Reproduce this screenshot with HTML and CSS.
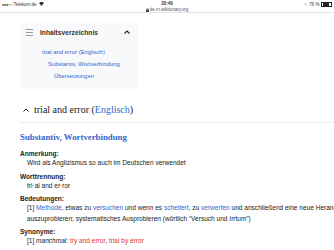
FILE: index.html
```html
<!DOCTYPE html>
<html lang="de">
<head>
<meta charset="utf-8">
<link rel="stylesheet" href="styles.css">
</head>
<body>
<div class="statusbar">
  <div class="sb-left"><span class="dots">●●●○○</span> Telekom.de
    <svg class="wifi" width="5" height="4" viewBox="0 0 10 8"><path d="M5 8 L0 2 A7 7 0 0 1 10 2 Z" fill="#333"/></svg>
  </div>
  <div class="sb-center">
    <div class="time">20:49</div>
    <div class="url"><svg width="3" height="4" viewBox="0 0 6 8"><rect x="0" y="3" width="6" height="5" fill="#444"/><path d="M1.5 3 V2 A1.5 1.5 0 0 1 4.5 2 V3" stroke="#444" fill="none"/></svg> de.m.wiktionary.org</div>
  </div>
  <div class="sb-right"><span class="arrow">↖</span> 76 % <span class="battery"><span class="battery-fill"></span></span></div>
</div>
<main class="page">
  <nav class="toc">
    <div class="toc-head">
      <svg class="toc-icon" width="7" height="7" viewBox="0 0 7 7"><rect y="0" width="7" height="1" fill="#999"/><rect y="3" width="7" height="1" fill="#999"/><rect y="6" width="7" height="1" fill="#999"/></svg>
      <span class="toc-title">Inhaltsverzeichnis</span>
      <svg class="toc-caret" width="6" height="4" viewBox="0 0 6 4"><path d="M0.5 3.5 L3 1 L5.5 3.5" stroke="#222" stroke-width="1.1" fill="none"/></svg>
    </div>
    <ul class="toc-list">
      <li class="lvl1"><a>trial and error (Englisch)</a></li>
      <li class="lvl2"><a>Substantiv, Wortverbindung</a></li>
      <li class="lvl3"><a>Übersetzungen</a></li>
    </ul>
  </nav>
  <h2 class="lang-head"><svg class="h-caret" width="6" height="4" viewBox="0 0 6 4"><path d="M0.5 3.5 L3 1 L5.5 3.5" stroke="#222" stroke-width="1" fill="none"/></svg><span>trial and error (<a class="blue">Englisch</a>)</span></h2>
  <h3 class="pos">Substantiv, Wortverbindung</h3>
  <dl class="entry">
    <dt>Anmerkung:</dt>
    <dd>Wird als Anglizismus so auch im Deutschen verwendet</dd>
    <dt>Worttrennung:</dt>
    <dd>tri·al and er·ror</dd>
    <dt>Bedeutungen:</dt>
    <dd>[1] <a class="blue">Methode</a>, etwas zu <a class="blue">versuchen</a> und wenn es <a class="blue">scheitert</a>, zu <a class="blue">verwerfen</a> und anschließend eine neue Herangehensweise auszuprobieren; systematisches Ausprobieren (wörtlich “Versuch und Irrtum”)</dd>
    <dt>Synonyme:</dt>
    <dd>[1] <i>manchmal:</i> <a class="red">try and error</a>, <a class="red">trial by error</a></dd>
  </dl>
</main>
</body>
</html>
```
FILE: styles.css
```css
html, body {
  margin: 0;
  padding: 0;
  background: #fff;
  overflow: hidden;
  width: 334px;
  height: 250px;
}
body {
  font-family: "Liberation Sans", Arial, sans-serif;
  color: #222;
}
.statusbar {
  height: 12px;
  border-bottom: 1px solid #e4e4e4;
  display: flex;
  justify-content: space-between;
  align-items: flex-start;
  font-size: 4.5px;
  color: #333;
  padding: 0 2px;
  box-sizing: content-box;
  width: 330px;
}
.sb-left {
  padding-top: 1.5px;
  display: flex;
  align-items: center;
  gap: 1px;
  width: 60px;
}
.dots { letter-spacing: -0.3px; font-size: 4px; }
.wifi { margin-left: 1px; }
.sb-center {
  display: flex;
  flex-direction: column;
  align-items: center;
  line-height: 6px;
  padding-top: 0.5px;
}
.time { font-weight: bold; }
.url { color: #555; display: flex; align-items: center; gap: 1px; }
.sb-right {
  width: 60px;
  display: flex;
  justify-content: flex-end;
  align-items: center;
  gap: 1px;
  padding-top: 1.5px;
}
.arrow { font-size: 4px; color: #666; margin-right: 1px; }
.battery {
  width: 8px;
  height: 3px;
  border: 0.5px solid #222;
  display: inline-block;
  padding: 0.3px;
  margin-left: 1px;
}
.battery-fill { display: block; width: 76%; height: 100%; background: #222; }

.page {
  width: 395px;
  padding: 10px 0 0 20px;
}
.toc {
  width: 118px;
  background: #f8f9fa;
  padding: 5px 0 7px 0;
}
.toc-head {
  display: flex;
  align-items: center;
  height: 8px;
  padding: 0 8px 0 6px;
}
.toc-icon { margin-right: 7px; }
.toc-title {
  font-weight: bold;
  font-size: 6.7px;
  color: #333;
  flex: 1;
}
.toc-list {
  list-style: none;
  margin: 10px 0 0 0;
  padding: 0;
  font-size: 5.9px;
  line-height: 12px;
}
.toc-list a { color: #3366cc; }
.lvl1 { padding-left: 22px; }
.lvl2 { padding-left: 28px; }
.lvl3 { padding-left: 34px; }

.lang-head {
  margin: 14px 0 0 0;
  padding: 0 0 5px 3px;
  border-bottom: 1px solid #eaecf0;
  font-family: "Liberation Serif", "Times New Roman", serif;
  font-weight: normal;
  font-size: 10px;
  line-height: 14px;
  color: #222;
  display: flex;
  align-items: center;
  gap: 5px;
}
.blue { color: #3366cc; }
.red { color: #dd3333; }
.pos {
  margin: 8px 0 0 0;
  font-family: "Liberation Serif", "Times New Roman", serif;
  font-weight: bold;
  font-size: 8.8px;
  line-height: 12px;
  color: #3366cc;
}
.entry {
  margin: 6px 0 0 0;
  font-size: 6.55px;
}
.entry dt {
  font-weight: bold;
  line-height: 9px;
  margin-top: 3px;
}
.entry dt:first-child { margin-top: 0; }
.entry dd {
  margin: 0 0 0 7px;
  line-height: 10.5px;
}
```
